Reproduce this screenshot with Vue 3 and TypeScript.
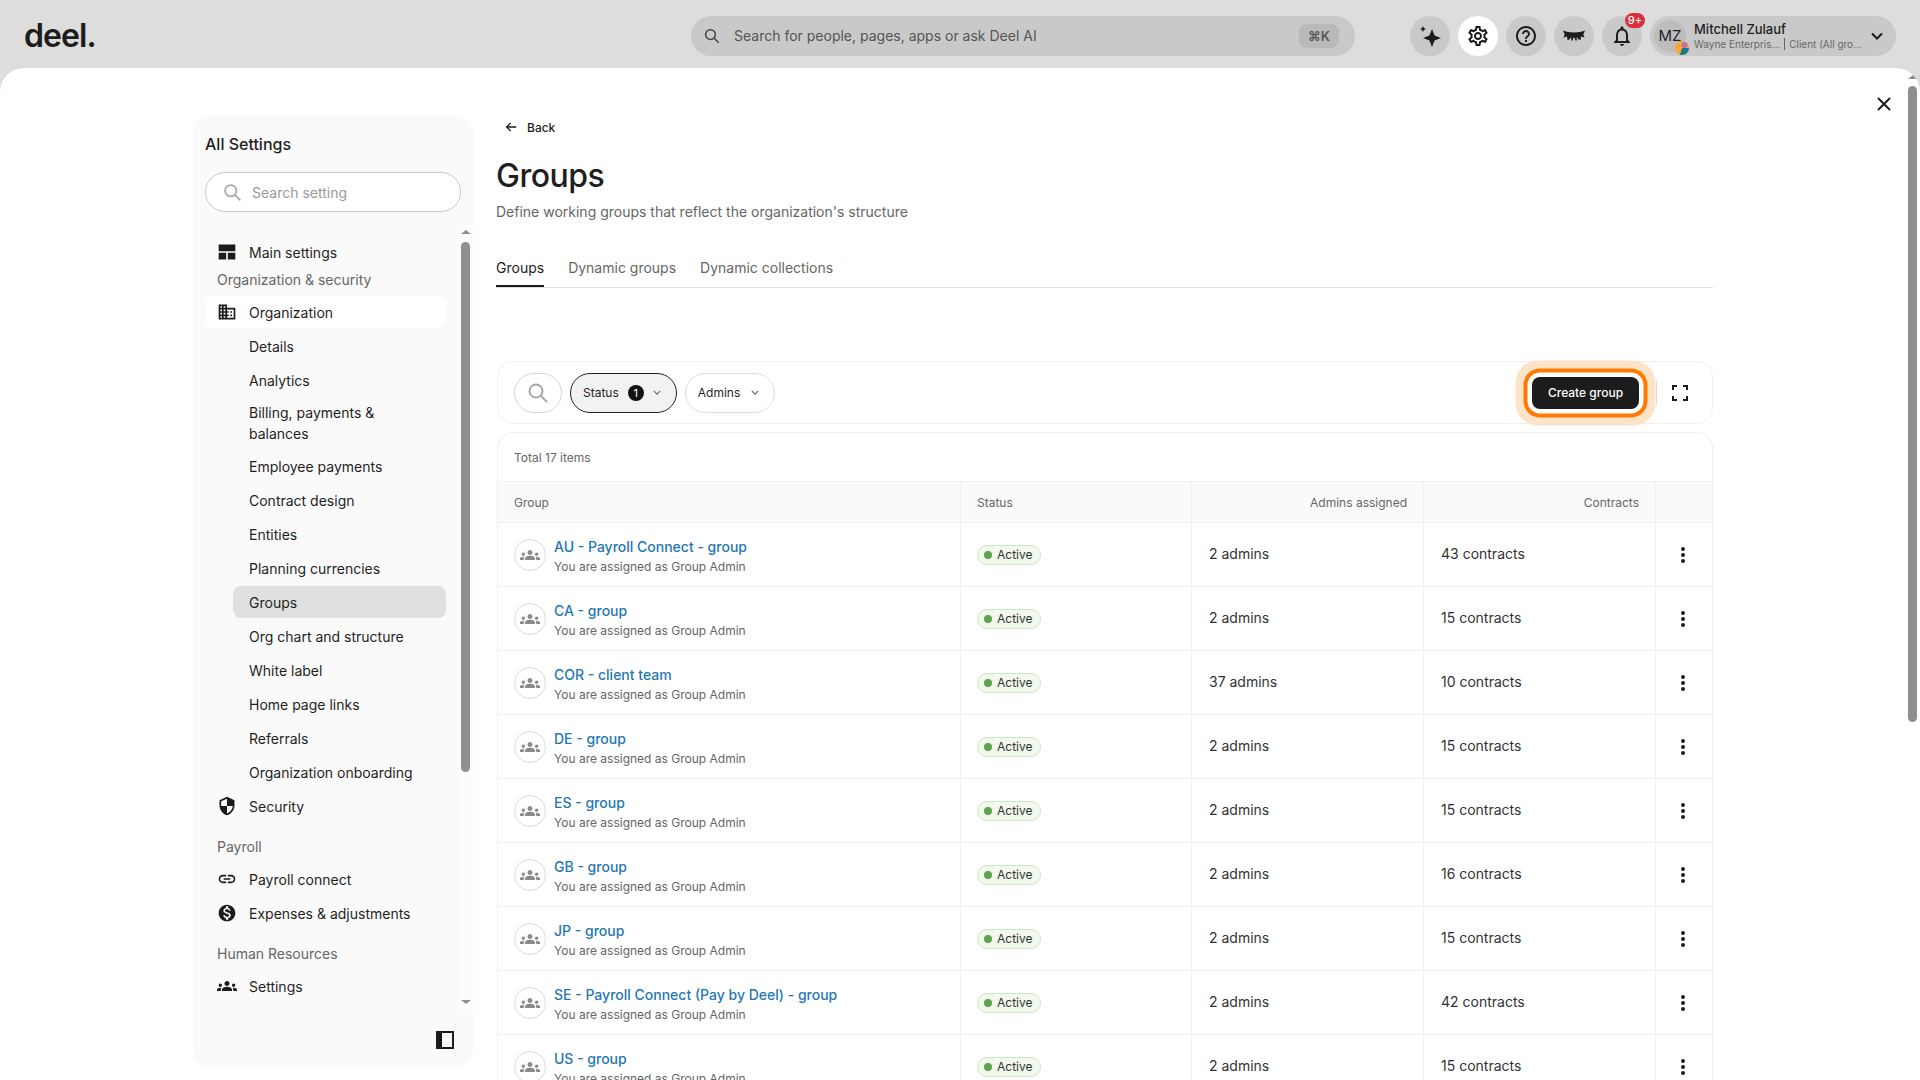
<template>
  <div class="shell">
    <header class="topbar">
      <div class="logo">deel.</div>
      <div class="global-search">
        <svg class="search-ico" viewBox="0 0 24 24"><circle cx="10" cy="10" r="6.5" /><path d="M15 15l6 6" /></svg>
        <span class="global-search-text">Search for people, pages, apps or ask Deel AI</span>
        <span class="kbd">⌘K</span>
      </div>
      <div class="top-actions">
        <button class="round">
          <svg viewBox="0 0 24 24" class="ico24"><path d="M14 5l2.600 6.400L23 14l-6.400 2.600L14 23l-2.600-6.400L5 14l6.400-2.600zM5 2l.9 2.100L8 5l-2.100.9L5 8l-.9-2.100L2 5l2.100-.9z" /></svg>
        </button>
        <button class="round white">
          <svg viewBox="0 0 24 24" class="ico24"><path :d="icons.gear" /></svg>
        </button>
        <button class="round">
          <svg viewBox="0 0 24 24" class="ico24"><path :d="icons.help" /></svg>
        </button>
        <button class="round">
          <svg viewBox="0 0 24 24" class="ico24"><path d="M1 6.500C6 9 18 9 23 6.500l-1.700 4 1.200 3-3.500-1-.5 3.500-2-.5-1.500-2.200-.4.1.4 3.100h-1.500l-.9-2.800h-1.200l-.9 2.800H9l.4-3.100-.4-.1-1.500 2.200-2 .5-.5-3.500-3.500 1 1.200-3z" /></svg>
        </button>
        <button class="round bell">
          <svg viewBox="0 0 24 24" class="ico24"><path :d="icons.bell" /></svg>
          <span class="bell-count">9+</span>
        </button>
        <div class="user">
          <div class="user-avatar">
            MZ
            <svg class="user-org" viewBox="0 0 14 14">
              <circle cx="7" cy="7" r="7" fill="#f2a93b" />
              <path d="M7 7l7 0a7 7 0 0 1-7 7z" fill="#17798a" />
              <path d="M7 7v7a7 7 0 0 1-2-.3z" fill="#17798a" />
              <circle cx="9.500" cy="4" r="3" fill="#c46cb0" />
            </svg>
          </div>
          <div class="user-text">
            <div class="user-name">Mitchell Zulauf</div>
            <div class="user-sub"><span>Wayne Enterpris...</span><i></i><span>Client (All gro...</span></div>
          </div>
          <svg class="user-chev" viewBox="0 0 12 8"><path d="M1 1.500l5 5 5-5" /></svg>
        </div>
      </div>
    </header>

    <div class="sheet">
      <aside class="side">
        <h2 class="side-title">All Settings</h2>
        <div class="side-search">
          <svg viewBox="0 0 24 24"><circle cx="10" cy="10" r="6.500" /><path d="M15 15l6 6" /></svg>
          <span>Search setting</span>
        </div>
        <nav class="side-nav">
          <template v-for="item in nav" :key="item.label">
            <div v-if="item.kind === 'label'" class="nav-label" :class="{ first: item.first }">{{ item.label }}</div>
            <div v-else-if="item.kind === 'sub'" class="nav-sub" :class="{ active: item.active }">{{ item.label }}</div>
            <div v-else class="nav-item" :class="{ open: item.open }">
              <span class="nav-ico"><svg viewBox="0 0 24 24"><path :d="icons[item.icon!]" /></svg></span>
              {{ item.label }}
            </div>
          </template>
        </nav>
        <div class="side-track">
          <span class="arrow-up"></span>
          <span class="side-thumb"></span>
          <span class="arrow-down"></span>
        </div>
        <span class="collapse"></span>
      </aside>

      <main class="content">
        <a class="back">
          <svg viewBox="0 0 16 16"><path d="M14 8H3M7.500 3.500L3 8l4.500 4.500" /></svg>
          Back
        </a>
        <h1 class="title">Groups</h1>
        <p class="desc">Define working groups that reflect the organization's structure</p>
        <div class="tabs">
          <span class="tab active">Groups</span>
          <span class="tab">Dynamic groups</span>
          <span class="tab">Dynamic collections</span>
        </div>

        <div class="filters">
          <button class="filter-search">
            <svg viewBox="0 0 24 24"><circle cx="10" cy="10" r="6.500" /><path d="M15 15l6 6" /></svg>
          </button>
          <button class="chip on">
            Status <span class="chip-count">1</span>
            <svg viewBox="0 0 10 6"><path d="M1 1l4 4 4-4" /></svg>
          </button>
          <button class="chip">
            Admins
            <svg viewBox="0 0 10 6"><path d="M1 1l4 4 4-4" /></svg>
          </button>
          <button class="create">Create group</button>
          <span class="expand">
            <svg viewBox="0 0 16 16"><path d="M1 5V1h4M11 1h4v4M15 11v4h-4M5 15H1v-4" /></svg>
          </span>
        </div>

        <section class="table">
          <div class="total">Total 17 items</div>
          <div class="row head">
            <div class="cell">Group</div>
            <div class="cell">Status</div>
            <div class="cell right">Admins assigned</div>
            <div class="cell right">Contracts</div>
            <div class="cell"></div>
          </div>
          <div v-for="g in groups" :key="g.name" class="row">
            <div class="cell group">
              <span class="group-ava"><svg viewBox="0 0 24 24"><path :d="icons.groups" /></svg></span>
              <div class="group-text">
                <a class="group-name">{{ g.name }}</a>
                <div class="group-sub">You are assigned as Group Admin</div>
              </div>
            </div>
            <div class="cell status"><span class="badge"><i></i>Active</span></div>
            <div class="cell val">{{ g.admins }} admins</div>
            <div class="cell val">{{ g.contracts }} contracts</div>
            <div class="cell kebab">
              <svg viewBox="0 0 4 16"><circle cx="2" cy="2" r="2" /><circle cx="2" cy="8" r="2" /><circle cx="2" cy="14" r="2" /></svg>
            </div>
          </div>
        </section>
      </main>

      <svg class="close" viewBox="0 0 14 14"><path d="M1 1l12 12M13 1L1 13" /></svg>
      <div class="page-track">
        <span class="arrow-up"></span>
        <span class="page-thumb"></span>
      </div>
    </div>
  </div>
</template>

<script setup lang="ts">
type NavItem = {
  kind: 'item' | 'sub' | 'label'
  label: string
  icon?: string
  open?: boolean
  active?: boolean
  first?: boolean
}

const icons: Record<string, string> = {
  gear: 'M19.43 12.98c.04-.32.07-.64.07-.98 0-.34-.03-.66-.07-.98l2.11-1.65c.19-.15.24-.42.12-.64l-2-3.46c-.09-.16-.26-.25-.44-.25-.06 0-.12.01-.17.03l-2.49 1c-.52-.4-1.08-.73-1.69-.98l-.38-2.65C14.46 2.18 14.25 2 14 2h-4c-.25 0-.46.18-.49.42l-.38 2.65c-.61.25-1.17.59-1.69.98l-2.49-1c-.06-.02-.12-.03-.18-.03-.17 0-.34.09-.43.25l-2 3.46c-.13.22-.07.49.12.64l2.11 1.65c-.04.32-.07.65-.07.98 0 .33.03.66.07.98l-2.11 1.65c-.19.15-.24.42-.12.64l2 3.46c.09.16.26.25.44.25.06 0 .12-.01.17-.03l2.49-1c.52.4 1.08.73 1.69.98l.38 2.65c.03.24.24.42.49.42h4c.25 0 .46-.18.49-.42l.38-2.65c.61-.25 1.17-.59 1.69-.98l2.49 1c.06.02.12.03.18.03.17 0 .34-.09.43-.25l2-3.46c.12-.22.07-.49-.12-.64l-2.11-1.65zm-1.98-1.71c.04.31.05.52.05.73 0 .21-.02.43-.05.73l-.14 1.13.89.7 1.08.84-.7 1.21-1.27-.51-1.04-.42-.9.68c-.43.32-.84.56-1.25.73l-1.06.43-.16 1.13-.2 1.35h-1.4l-.19-1.35-.16-1.13-1.06-.43c-.43-.18-.83-.41-1.23-.71l-.91-.7-1.06.43-1.27.51-.7-1.21 1.08-.84.89-.7-.14-1.13c-.03-.31-.05-.54-.05-.74s.02-.43.05-.73l.14-1.13-.89-.7-1.08-.84.7-1.21 1.27.51 1.04.42.9-.68c.43-.32.84-.56 1.25-.73l1.06-.43.16-1.13.2-1.35h1.39l.19 1.35.16 1.13 1.06.43c.43.18.83.41 1.23.71l.91.7 1.06-.43 1.27-.51.7 1.21-1.07.85-.89.7.14 1.13zM12 8c-2.21 0-4 1.79-4 4s1.79 4 4 4 4-1.79 4-4-1.79-4-4-4zm0 6c-1.1 0-2-.9-2-2s.9-2 2-2 2 .9 2 2-.9 2-2 2z',
  help: 'M11 18h2v-2h-2v2zm1-16C6.48 2 2 6.48 2 12s4.48 10 10 10 10-4.48 10-10S17.52 2 12 2zm0 18c-4.41 0-8-3.59-8-8s3.59-8 8-8 8 3.59 8 8-3.59 8-8 8zm0-14c-2.21 0-4 1.79-4 4h2c0-1.1.9-2 2-2s2 .9 2 2c0 2-3 1.75-3 5h2c0-2.25 3-2.5 3-5 0-2.21-1.79-4-4-4z',
  bell: 'M12 22c1.1 0 2-.9 2-2h-4c0 1.1.9 2 2 2zm6-6v-5c0-3.07-1.63-5.64-4.5-6.32V4c0-.83-.67-1.5-1.5-1.5s-1.5.67-1.5 1.5v.68C7.64 5.36 6 7.92 6 11v5l-2 2v1h16v-1l-2-2zm-2 1H8v-6c0-2.48 1.51-4.5 4-4.5s4 2.02 4 4.5v6z',
  dashboard: 'M2 3h20v8H2zM2 13h9v8H2zM13 13h9v8h-9z',
  domain: 'M12 7V3H2v18h20V7H12zM6 19H4v-2h2v2zm0-4H4v-2h2v2zm0-4H4V9h2v2zm0-4H4V5h2v2zm4 12H8v-2h2v2zm0-4H8v-2h2v2zm0-4H8V9h2v2zm0-4H8V5h2v2zm10 12h-8v-2h2v-2h-2v-2h2v-2h-2V9h8v10zm-2-8h-2v2h2v-2zm0 4h-2v2h2v-2z',
  shield: 'M12 1L3 5v6c0 5.55 3.84 10.74 9 12 5.16-1.26 9-6.45 9-12V5l-9-4zm0 10.99h7c-.53 4.12-3.28 7.79-7 8.94V12H5V6.3l7-3.11v8.8z',
  link: 'M3.9 12c0-1.71 1.39-3.1 3.1-3.1h4V7H7c-2.76 0-5 2.24-5 5s2.24 5 5 5h4v-1.9H7c-1.71 0-3.1-1.39-3.1-3.1zM8 13h8v-2H8v2zm9-6h-4v1.9h4c1.71 0 3.1 1.39 3.1 3.1s-1.39 3.1-3.1 3.1h-4V17h4c2.76 0 5-2.24 5-5s-2.24-5-5-5z',
  money: 'M12 2C6.48 2 2 6.48 2 12s4.48 10 10 10 10-4.48 10-10S17.52 2 12 2zm1.41 16.09V20h-2.67v-1.93c-1.71-.36-3.16-1.46-3.27-3.4h1.96c.1 1.05.82 1.87 2.65 1.87 1.96 0 2.4-.98 2.4-1.59 0-.83-.44-1.61-2.67-2.14-2.48-.6-4.18-1.62-4.18-3.67 0-1.72 1.39-2.84 3.11-3.21V4h2.67v1.95c1.86.45 2.79 1.86 2.85 3.39H14.3c-.05-1.11-.64-1.87-2.22-1.87-1.5 0-2.4.68-2.4 1.64 0 .84.65 1.39 2.67 1.91s4.18 1.39 4.18 3.91c-.01 1.83-1.38 2.84-3.12 3.16z',
  groups: 'M12 12.75c1.63 0 3.07.39 4.24.9 1.08.48 1.76 1.56 1.76 2.73V18H6v-1.61c0-1.18.68-2.26 1.76-2.73 1.17-.52 2.61-.91 4.24-.91zM4 13c1.1 0 2-.9 2-2s-.9-2-2-2-2 .9-2 2 .9 2 2 2zm1.13 1.1c-.37-.06-.74-.1-1.13-.1-.99 0-1.93.21-2.78.58C.48 14.9 0 15.62 0 16.43V18h4.5v-1.61c0-.83.23-1.61.63-2.29zM20 13c1.1 0 2-.9 2-2s-.9-2-2-2-2 .9-2 2 .9 2 2 2zm4 3.43c0-.81-.48-1.53-1.22-1.85-.85-.37-1.79-.58-2.78-.58-.39 0-.76.04-1.13.1.4.68.63 1.46.63 2.29V18H24v-1.57zM12 6c1.66 0 3 1.34 3 3s-1.34 3-3 3-3-1.34-3-3 1.34-3 3-3z',
}

const nav: NavItem[] = [
  { kind: 'item', label: 'Main settings', icon: 'dashboard' },
  { kind: 'label', label: 'Organization & security', first: true },
  { kind: 'item', label: 'Organization', icon: 'domain', open: true },
  { kind: 'sub', label: 'Details' },
  { kind: 'sub', label: 'Analytics' },
  { kind: 'sub', label: 'Billing, payments & balances' },
  { kind: 'sub', label: 'Employee payments' },
  { kind: 'sub', label: 'Contract design' },
  { kind: 'sub', label: 'Entities' },
  { kind: 'sub', label: 'Planning currencies' },
  { kind: 'sub', label: 'Groups', active: true },
  { kind: 'sub', label: 'Org chart and structure' },
  { kind: 'sub', label: 'White label' },
  { kind: 'sub', label: 'Home page links' },
  { kind: 'sub', label: 'Referrals' },
  { kind: 'sub', label: 'Organization onboarding' },
  { kind: 'item', label: 'Security', icon: 'shield' },
  { kind: 'label', label: 'Payroll' },
  { kind: 'item', label: 'Payroll connect', icon: 'link' },
  { kind: 'item', label: 'Expenses & adjustments', icon: 'money' },
  { kind: 'label', label: 'Human Resources' },
  { kind: 'item', label: 'Settings', icon: 'groups' },
]

const groups = [
  { name: 'AU - Payroll Connect - group', admins: 2, contracts: 43 },
  { name: 'CA - group', admins: 2, contracts: 15 },
  { name: 'COR - client team', admins: 37, contracts: 10 },
  { name: 'DE - group', admins: 2, contracts: 15 },
  { name: 'ES - group', admins: 2, contracts: 15 },
  { name: 'GB - group', admins: 2, contracts: 16 },
  { name: 'JP - group', admins: 2, contracts: 15 },
  { name: 'SE - Payroll Connect (Pay by Deel) - group', admins: 2, contracts: 42 },
  { name: 'US - group', admins: 2, contracts: 15 },
]
</script>

<style>
html,
body {
  overflow: hidden;
}
</style>

<style scoped>
.shell {
  height: 1080px;
  display: flex;
  flex-direction: column;
  overflow: hidden;
  background: #dddddd;
  font-family: Inter, "Liberation Sans", sans-serif;
  color: #1f1f1f;
  font-size: 14px;
}

button {
  font-family: inherit;
  color: inherit;
  cursor: pointer;
}

/* top bar */
.topbar {
  height: 68px;
  flex: none;
  box-sizing: border-box;
  position: relative;
  padding: 16px 24px 12px;
  display: flex;
  align-items: center;
}

.logo {
  width: 667px;
  font-size: 32px;
  font-weight: 600;
  letter-spacing: -0.9px;
  line-height: 40px;
  color: #1c1c1c;
}

.global-search {
  width: 664px;
  height: 40px;
  box-sizing: border-box;
  background: #c9c9c9;
  border-radius: 20px;
  display: flex;
  align-items: center;
  padding: 0 16px 0 12px;
}

.search-ico {
  width: 18px;
  height: 18px;
  fill: none;
  stroke: #444;
  stroke-width: 2;
}

.global-search-text {
  margin-left: 13px;
  padding-bottom: 1px;
  flex: 1;
  color: #555;
}

.kbd {
  width: 40px;
  height: 24px;
  line-height: 24px;
  text-align: center;
  border-radius: 8px;
  background: #b9b9b9;
  color: #555;
  font-size: 13px;
  font-weight: 600;
}

.top-actions {
  margin-left: 55px;
  display: flex;
  gap: 8px;
}

.round {
  width: 40px;
  height: 40px;
  border: 0;
  padding: 0;
  border-radius: 50%;
  background: #c9c9c9;
  display: flex;
  align-items: center;
  justify-content: center;
  position: relative;
}

.round.white {
  background: #fff;
}

.ico24 {
  width: 24px;
  height: 24px;
  fill: #1c1c1c;
}

.bell-count {
  position: absolute;
  top: -3px;
  right: -3px;
  width: 20px;
  height: 15px;
  border-radius: 8px;
  background: #d9303e;
  color: #fff;
  font-size: 11px;
  font-weight: 500;
  line-height: 15px;
  text-align: center;
}

.user {
  width: 246px;
  height: 40px;
  box-sizing: border-box;
  background: #c9c9c9;
  border-radius: 20px;
  display: flex;
  align-items: center;
  padding: 0 13px 0 4px;
}

.user-avatar {
  width: 32px;
  height: 32px;
  border-radius: 50%;
  background: #bdbdbd;
  position: relative;
  text-align: center;
  line-height: 32px;
  font-size: 15px;
}

.user-org {
  position: absolute;
  left: 21px;
  top: 21px;
  width: 14px;
  height: 14px;
}

.user-text {
  margin-left: 8px;
  flex: 1;
}

.user-name {
  font-size: 13px;
  font-weight: 500;
  line-height: 16px;
}

.user-sub {
  font-size: 10px;
  line-height: 14px;
  color: #666;
  display: flex;
  align-items: center;
  gap: 4px;
  white-space: nowrap;
}

.user-sub i {
  width: 1px;
  height: 12px;
  background: #666;
}

.user-chev {
  width: 12px;
  height: 8px;
  fill: none;
  stroke: #1c1c1c;
  stroke-width: 2;
}

/* white sheet */
.sheet {
  flex: 1;
  min-height: 0;
  position: relative;
  display: flex;
  background: #fff;
  border-radius: 24px 24px 0 0;
  padding: 48px 0 0 193px;
  overflow: hidden;
}

.close {
  position: absolute;
  top: 29px;
  left: 1877px;
  width: 14px;
  height: 14px;
  fill: none;
  stroke: #1c1c1c;
  stroke-width: 2;
}

.page-track {
  position: absolute;
  top: 7px;
  left: 1908px;
  width: 9px;
}

.page-thumb {
  display: block;
  margin-top: 7px;
  height: 636px;
  background: #8f8f8f;
  border-radius: 5px;
}

.arrow-up,
.arrow-down {
  display: block;
  width: 0;
  height: 0;
  margin: 0 auto;
  border-left: 5px solid transparent;
  border-right: 5px solid transparent;
}

.arrow-up {
  border-bottom: 4px solid #8f8f8f;
}

.arrow-down {
  border-top: 4px solid #8f8f8f;
}

/* sidebar */
.side {
  width: 280px;
  height: 951px;
  flex: none;
  box-sizing: border-box;
  padding: 12px;
  background: #fafafa;
  border-radius: 16px;
  position: relative;
  overflow: hidden;
}

.side-title {
  margin: 4px 0 0;
  font-size: 16px;
  font-weight: 500;
  line-height: 24px;
}

.side-search {
  margin-top: 16px;
  width: 256px;
  height: 40px;
  box-sizing: border-box;
  border: 1px solid #c9c9c9;
  border-radius: 20px;
  background: #fff;
  display: flex;
  align-items: center;
  gap: 9px;
  padding-left: 16px;
  color: #9a9a9a;
}

.side-search svg {
  width: 21px;
  height: 21px;
  fill: none;
  stroke: #a8a8a8;
  stroke-width: 2;
}

.side-nav {
  margin-top: 24px;
  width: 241px;
}

.nav-item,
.nav-sub {
  min-height: 32px;
  margin-bottom: 2px;
  display: flex;
  align-items: center;
  border-radius: 8px;
  line-height: 21px;
}

.nav-item {
  padding-left: 12px;
}

.nav-item.open {
  background: #fff;
}

.nav-ico {
  width: 20px;
  height: 20px;
  margin-right: 12px;
  display: flex;
  align-items: center;
  justify-content: center;
}

.nav-ico svg {
  width: 20px;
  height: 20px;
  fill: #1c1c1c;
}

.nav-sub {
  margin-left: 28px;
  padding: 4px 16px;
  box-sizing: border-box;
}

.nav-sub.active {
  background: #e0e0e0;
}

.nav-label {
  height: 20px;
  line-height: 20px;
  padding-left: 12px;
  margin: 15px 0 6px;
  color: #666;
}

.nav-label.first {
  margin: 0 0 6px;
}

.side-track {
  position: absolute;
  top: 108px;
  left: 265px;
  width: 15px;
  height: 788px;
  background: #fcfcfc;
  box-sizing: border-box;
  padding-top: 6px;
}

.side-thumb {
  display: block;
  width: 9px;
  height: 530px;
  margin: 8px 0 0 3px;
  background: #8f8f8f;
  border-radius: 5px;
}

.side-track .arrow-down {
  margin-top: 228px;
}

.collapse {
  position: absolute;
  left: 243px;
  top: 915px;
  width: 18px;
  height: 18px;
  box-sizing: border-box;
  border: 2px solid #1c1c1c;
  border-left-width: 6px;
}

/* main column */
.content {
  width: 1217px;
  margin-left: 23px;
  flex: none;
}

.back {
  display: inline-flex;
  align-items: center;
  gap: 9px;
  height: 22px;
  margin-left: 8px;
  font-size: 12px;
  font-weight: 500;
}

.back svg {
  width: 14px;
  height: 14px;
  fill: none;
  stroke: #1c1c1c;
  stroke-width: 1.6;
}

.title {
  margin: 18px 0 0;
  font-size: 32px;
  font-weight: 500;
  line-height: 40px;
  letter-spacing: -0.5px;
}

.desc {
  margin: 6px 0 0;
  line-height: 20px;
  color: #666;
}

.tabs {
  margin-top: 33px;
  height: 32px;
  display: flex;
  gap: 24px;
  border-bottom: 1px solid #e0e0e0;
  color: #666;
}

.tab {
  height: 31px;
  line-height: 24px;
  padding-top: 1px;
  box-sizing: border-box;
}

.tab.active {
  color: #1c1c1c;
  height: 32px;
  border-bottom: 2px solid #1c1c1c;
}

.filters {
  margin: 73px 0 0 1px;
  height: 63px;
  box-sizing: border-box;
  border: 1px solid #f0f0f0;
  border-radius: 16px;
  padding: 0 16px;
  display: flex;
  align-items: center;
}

.filter-search {
  width: 48px;
  height: 40px;
  padding: 0;
  background: #fff;
  border: 1px solid #d4d4d4;
  border-radius: 20px;
  display: flex;
  align-items: center;
  justify-content: center;
  margin-right: 8px;
}

.filter-search svg {
  width: 24px;
  height: 24px;
  fill: none;
  stroke: #a8a8a8;
  stroke-width: 2;
}

.chip {
  height: 40px;
  box-sizing: border-box;
  padding: 0 15px 0 12px;
  border: 1px solid #dedede;
  border-radius: 20px;
  background: #fff;
  font-size: 12px;
  display: flex;
  align-items: center;
  gap: 9px;
  margin-right: 8px;
}

.chip svg {
  width: 8px;
  height: 5px;
  margin-left: 2px;
  fill: none;
  stroke: #666;
  stroke-width: 1.5;
}

.chip.on {
  background: #f2f2f2;
  border-color: #222;
}

.chip.on svg {
  margin-left: 0;
}

.chip-count {
  width: 16px;
  height: 16px;
  line-height: 16px;
  border-radius: 50%;
  background: #111;
  color: #fff;
  font-size: 11px;
  text-align: center;
}

.create {
  margin-left: auto;
  margin-right: 17px;
  width: 107px;
  height: 32px;
  border: 0;
  padding: 0;
  border-radius: 8px;
  background: #1c1c1c;
  color: #fff;
  font-size: 12px;
  font-weight: 500;
  box-shadow: 0 0 0 4.5px #fff, 0 0 0 8.5px #ff7a00, 0 0 0 16.5px #fde3c8;
}

.expand {
  width: 56px;
  height: 24px;
  margin-right: -16px;
  padding-right: 10px;
  display: flex;
  align-items: center;
  justify-content: center;
  border-left: 1px solid #dcdcdc;
  box-sizing: border-box;
  position: relative;
}

.expand svg {
  width: 16px;
  height: 16px;
  fill: none;
  stroke: #1c1c1c;
  stroke-width: 2;
}

.table {
  margin: 8px 0 0 1px;
  border: 1px solid #f0f0f0;
  border-bottom: 0;
  border-radius: 16px 16px 0 0;
}

.total {
  height: 48px;
  line-height: 50px;
  padding-left: 16px;
  font-size: 12px;
  color: #666;
}

.row {
  display: grid;
  grid-template-columns: 462px 231px 232px 232px 1fr;
  height: 64px;
  box-sizing: border-box;
  border-top: 1px solid #f0f0f0;
}

.row.head {
  height: 41px;
  background: #fafafa;
  font-size: 12px;
  color: #666;
}

.cell {
  display: flex;
  align-items: center;
  padding: 0 17px;
  min-width: 0;
  border-left: 1px solid #f0f0f0;
}

.cell:first-child {
  border-left: 0;
  padding-left: 16px;
}

.cell:nth-child(2) {
  padding-left: 16px;
}

.cell.right {
  justify-content: flex-end;
  padding-right: 16px;
}

.group {
  gap: 8px;
}

.group-ava {
  width: 32px;
  height: 32px;
  flex: none;
  box-sizing: border-box;
  border: 1px solid #dcdcdc;
  border-radius: 50%;
  display: flex;
  align-items: center;
  justify-content: center;
}

.group-ava svg {
  width: 20px;
  height: 20px;
  fill: #8a8a8a;
}

.group-text {
  padding-top: 5px;
}

.group-name {
  display: block;
  font-weight: 500;
  line-height: 20px;
  color: #1f77b4;
}

.group-sub {
  font-size: 12px;
  line-height: 20px;
  color: #666;
}

.badge {
  height: 20px;
  box-sizing: border-box;
  display: inline-flex;
  align-items: center;
  gap: 5px;
  padding: 0 8px 0 6px;
  border: 1px solid #c8eab9;
  border-radius: 10px;
  background: #f0f9ec;
  font-size: 12px;
  color: #333;
}

.badge i {
  width: 8px;
  height: 8px;
  border-radius: 50%;
  background: #5ea152;
}

.val {
  color: #333;
  padding-bottom: 2px;
}

.kebab {
  justify-content: center;
  padding: 0 2px 0 0;
}

.kebab svg {
  width: 4px;
  height: 16px;
  fill: #1c1c1c;
}
</style>
